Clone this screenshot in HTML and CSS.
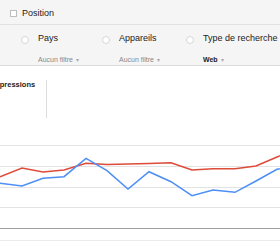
FILE: index.html
```html
<!DOCTYPE html>
<html lang="fr">
<head>
    <meta charset="UTF-8">
    <meta name="viewport" content="width=device-width, initial-scale=1.0">
    <title>Analyse de la recherche</title>
    <link rel="stylesheet" href="styles.css">
</head>
<body>
    <div class="options">
        <label class="check"><span class="box"></span>Position</label>
    </div>

    <div class="filters">
        <div class="filter f-pays">
            <span class="radio"></span>
            <div class="filter-text">
                <div class="filter-name">Pays</div>
                <div class="filter-value">Aucun filtre <span class="caret">&#9662;</span></div>
            </div>
        </div>
        <div class="filter f-appareils">
            <span class="radio"></span>
            <div class="filter-text">
                <div class="filter-name">Appareils</div>
                <div class="filter-value">Aucun filtre <span class="caret">&#9662;</span></div>
            </div>
        </div>
        <div class="filter">
            <span class="radio"></span>
            <div class="filter-text">
                <div class="filter-name">Type de recherche</div>
                <div class="filter-value active">Web <span class="caret">&#9662;</span></div>
            </div>
        </div>
    </div>

    <div class="summary">
        <div class="metric">Impressions</div>
    </div>

    <!-- chart: grid lines then the two series -->
    <svg class="chart" width="280" height="124" viewBox="0 0 280 124">
        <g stroke="#e3e3e3" stroke-width="1">
            <line x1="0" y1="25.5" x2="280" y2="25.5"/>
            <line x1="0" y1="46.5" x2="280" y2="46.5"/>
            <line x1="0" y1="67.5" x2="280" y2="67.5"/>
            <line x1="0" y1="87.5" x2="280" y2="87.5"/>
            <line x1="0" y1="120.5" x2="280" y2="120.5" stroke="#ececec"/>
        </g>
        <line x1="0" y1="108.5" x2="280" y2="108.5" stroke="#9e9e9e" stroke-width="1"/>
        <polyline fill="none" stroke="#dd4b39" stroke-width="1.5"
            points="-21,64 0,56.7 22,48 43,52 64,50 86,43.3 107,44.5 128,44 149,43.5 171,42.7 192,50 213,48.7 235,48.7 256,46 277,37 298,28"/>
        <polyline fill="none" stroke="#4d8ff5" stroke-width="1.5"
            points="-21,62 0,63.3 22,66 43,58.3 64,56.7 86,38.3 107,50.7 128,69 149,51.7 171,61.7 192,75.7 213,70 235,72.3 256,61 277,49.3 298,46"/>
    </svg>
</body>
</html>
```

FILE: styles.css
```css
body {
    margin: 0;
    width: 280px;
    height: 244px;
    overflow: hidden;
    background-color: #fff;
    font-family: "Liberation Sans", Arial, sans-serif;
    color: #222;
}
.options {
    height: 25px;
    box-sizing: border-box;
    background-color: #f5f5f5;
    border-bottom: 1px solid #e2e2e2;
    display: flex;
    align-items: center;
    padding-left: 10px;
}
.check {
    display: flex;
    align-items: center;
    font-size: 9px;
    line-height: 11px;
    margin-top: 2px;
}
.box {
    width: 5px;
    height: 5px;
    border: 1px solid #bdbdbd;
    background-color: #fff;
    margin-right: 5px;
}
.filters {
    display: flex;
    align-items: flex-start;
    background-color: #f5f5f5;
    border-bottom: 1px solid #dcdcdc;
    height: 41px;
    box-sizing: border-box;
    padding: 8px 0 0 21px;
}
.filter {
    display: flex;
    align-items: flex-start;
}
.f-pays {
    margin-right: 23px;
}
.f-appareils {
    margin-right: 26px;
}
.radio {
    width: 6px;
    height: 6px;
    border: 1px solid #d6d6d6;
    border-radius: 50%;
    background-color: #fff;
    margin: 3px 9px 0 0;
}
.filter-name {
    font-size: 9px;
    line-height: 11px;
    color: #222;
}
.filter-value {
    font-size: 7px;
    line-height: 9px;
    color: #888;
    margin-top: 11px;
}
.filter-value.active {
    color: #222;
    font-weight: bold;
}
.caret {
    font-size: 6px;
    color: #aaa;
    font-weight: normal;
    margin-left: 1px;
}
.summary {
    height: 54px;
    box-sizing: border-box;
    padding-top: 14px;
}
.metric {
    width: 55px;
    height: 38px;
    margin-left: -9px;
    border-right: 1px solid #dcdcdc;
    font-size: 7.5px;
    line-height: 9px;
    font-weight: bold;
    color: #222;
}
.chart {
    display: block;
}
```
